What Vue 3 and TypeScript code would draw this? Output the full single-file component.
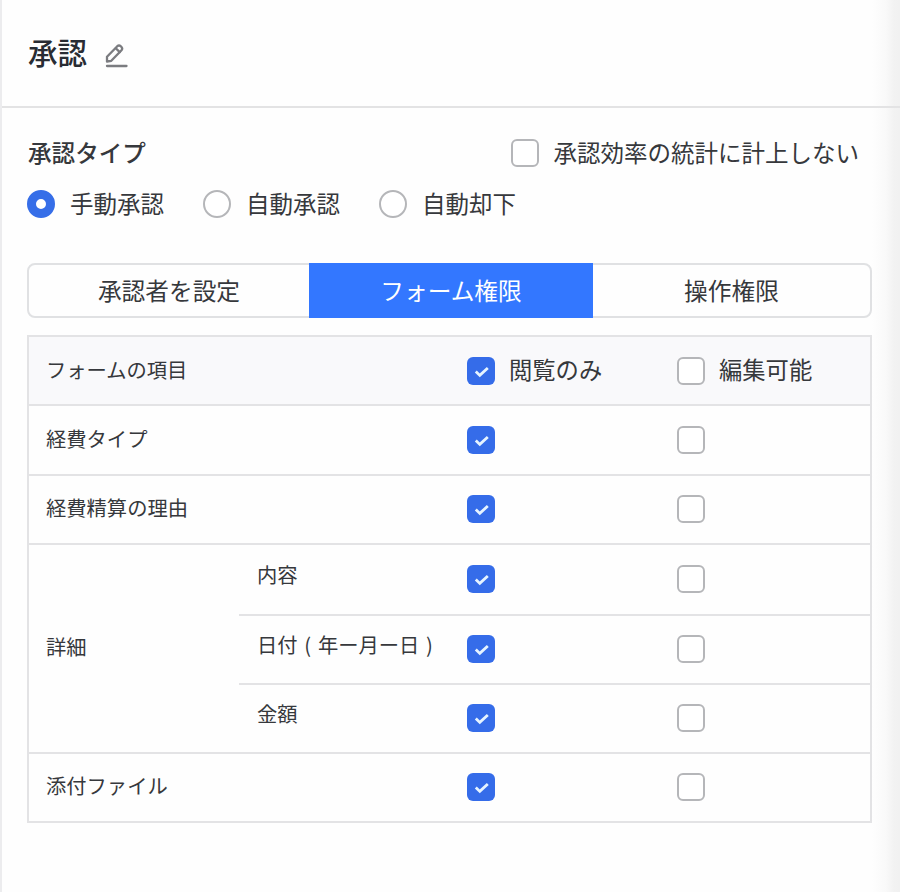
<script setup lang="ts">
import { ref } from 'vue'

interface Item {
  label: string
  detail?: string
  view: boolean
  edit: boolean
}

interface Group {
  label: string
  nested: boolean
  items: Item[]
}

const field = (label: string, detail?: string): Item => ({ label, detail, view: true, edit: false })

const approvalTypes = ['手動承認', '自動承認', '自動却下']
const selectedType = ref(0)
const excluded = ref(false)

const tabs = ['承認者を設定', 'フォーム権限', '操作権限']
const activeTab = ref(1)

const header = ref({ view: true, edit: false })

const groups = ref<Group[]>([
  { label: '経費タイプ', nested: false, items: [field('')] },
  { label: '経費精算の理由', nested: false, items: [field('')] },
  { label: '詳細', nested: true, items: [field('内容'), field('日付', '年ー月ー日'), field('金額')] },
  { label: '添付ファイル', nested: false, items: [field('')] },
])
</script>

<template>
  <div class="panel">
    <header class="head">
      <h1 class="title">承認</h1>
      <svg class="pencil" viewBox="0 0 24 26" fill="none" stroke="#7b7c80" stroke-width="2.3" stroke-linejoin="round" stroke-linecap="round">
        <path d="M3 18.5 L3 13.8 L13.3 3.2 Q15 1.7 16.7 3.2 L17.5 4 Q18.9 5.5 17.5 7.2 L7.3 17.8 Z" />
        <path d="M11.8 5.2 L15.7 9.1" />
        <path d="M3 23 H22.5" />
      </svg>
    </header>

    <main class="body">
      <div class="type-line">
        <h2 class="section">承認タイプ</h2>
        <button class="option" @click="excluded = !excluded">
          <span class="box" :class="{ on: excluded }"></span>
          <span class="caption">承認効率の統計に計上しない</span>
        </button>
      </div>

      <div class="radios">
        <button v-for="(t, i) in approvalTypes" :key="t" class="option" @click="selectedType = i">
          <span class="radio" :class="{ on: selectedType === i }"></span>
          <span class="caption">{{ t }}</span>
        </button>
      </div>

      <nav class="tabs">
        <button v-for="(t, i) in tabs" :key="t" class="tab" :class="{ active: activeTab === i }" @click="activeTab = i">{{ t }}</button>
      </nav>

      <section class="table">
        <div class="group top">
          <div class="label">フォームの項目</div>
          <div class="row">
            <button class="cell" @click="header.view = !header.view">
              <span class="box" :class="{ on: header.view }">
                <svg v-if="header.view" viewBox="0 0 28 28"><path d="M8.8 14.6 L12.8 18.4 L20.8 11" /></svg>
              </span>
              <span class="caption">閲覧のみ</span>
            </button>
            <button class="cell" @click="header.edit = !header.edit">
              <span class="box" :class="{ on: header.edit }">
                <svg v-if="header.edit" viewBox="0 0 28 28"><path d="M8.8 14.6 L12.8 18.4 L20.8 11" /></svg>
              </span>
              <span class="caption">編集可能</span>
            </button>
          </div>
        </div>

        <div v-for="g in groups" :key="g.label" class="group">
          <div class="label">{{ g.label }}</div>
          <div class="rows">
            <div v-for="item in g.items" :key="item.label" class="row" :class="{ nested: g.nested }">
              <span v-if="g.nested" class="sub">{{ item.label }}<template v-if="item.detail"><span class="paren">(</span>{{ item.detail }}<span class="paren">)</span></template></span>
              <button class="cell" @click="item.view = !item.view">
                <span class="box" :class="{ on: item.view }">
                  <svg v-if="item.view" viewBox="0 0 28 28"><path d="M8.8 14.6 L12.8 18.4 L20.8 11" /></svg>
                </span>
              </button>
              <button class="cell" @click="item.edit = !item.edit">
                <span class="box" :class="{ on: item.edit }">
                  <svg v-if="item.edit" viewBox="0 0 28 28"><path d="M8.8 14.6 L12.8 18.4 L20.8 11" /></svg>
                </span>
              </button>
            </div>
          </div>
        </div>
      </section>
    </main>
  </div>
</template>

<style>
body {
  background: #fefefe;
}
</style>

<style scoped>
.panel {
  box-sizing: border-box;
  width: 900px;
  height: 892px;
  overflow: hidden;
  border-left: 2px solid #ececee;
  background: linear-gradient(to right, #fefefe 870px, #f9f9f9 884px, #f2f2f2 892px, #f1f1f1 898px);
  color: #36383c;
  font-family: 'Noto Sans CJK JP', sans-serif;
  font-size: 23.5px;
  line-height: 32px;
}

button {
  margin: 0;
  padding: 0;
  border: 0;
  background: none;
  color: inherit;
  font: inherit;
  white-space: nowrap;
}

.head {
  box-sizing: border-box;
  display: flex;
  align-items: center;
  gap: 17px;
  height: 108px;
  padding-left: 26px;
  border-bottom: 2px solid #e3e3e4;
}

.title {
  margin: 0;
  padding-bottom: 5px;
  color: #292c33;
  font-size: 29.5px;
  font-weight: 500;
  line-height: 40px;
}

.pencil {
  width: 24px;
  height: 26px;
  margin-top: 5px;
}

.body {
  padding: 29px 26px 0 25px;
}

.type-line {
  display: flex;
  align-items: center;
  justify-content: space-between;
  width: 832px;
  height: 32px;
}

.section {
  margin: 0 0 0 1px;
  padding-bottom: 3px;
  font-size: 23.6px;
  font-weight: 500;
}

.option {
  display: flex;
  align-items: center;
  gap: 15px;
}

.caption {
  padding-bottom: 3px;
}

.radios {
  display: flex;
  gap: 39px;
  height: 32px;
  margin-top: 19px;
}

.radio,
.box {
  box-sizing: border-box;
  flex: none;
  display: block;
  width: 28px;
  height: 28px;
  border: 2px solid #b5b6b9;
  background: #fff;
}

.radio {
  border-radius: 50%;
}

.radio.on {
  border: 9px solid #366ee8;
}

.box {
  border-radius: 6px;
}

.box.on {
  border: 0;
  background: #356ce9;
}

.box svg {
  display: block;
  fill: none;
  stroke: #e6f4ff;
  stroke-width: 2.8;
}

.tabs {
  box-sizing: border-box;
  display: grid;
  grid-template-columns: 280px 284px 1fr;
  width: 845px;
  height: 55px;
  margin-top: 43px;
  border: 2px solid #e0e1e3;
  border-radius: 8px;
}

.tab {
  margin: -2px 0;
  padding-bottom: 1px;
  font-size: 23.7px;
}

.tab.active {
  background: #3377ff;
  color: #fff;
}

.table {
  box-sizing: border-box;
  display: grid;
  grid-template-rows: 67px 69.5px 69.5px 208.5px 1fr;
  width: 845px;
  height: 488px;
  margin-top: 17px;
  border: 2px solid #e3e3e5;
  font-size: 20.3px;
}

.group {
  box-sizing: border-box;
  display: grid;
  grid-template-columns: 210px 1fr;
  border-top: 2px solid #e3e3e5;
}

.top {
  border-top: 0;
  background: #f9f9fb;
}

.label {
  align-self: center;
  padding: 0 0 4px 17px;
  white-space: nowrap;
}

.rows {
  display: grid;
  grid-auto-rows: 1fr;
}

.row {
  box-sizing: border-box;
  display: grid;
  grid-template-columns: 210px 1fr;
  align-items: center;
  padding-left: 228px;
}

.row.nested {
  grid-template-columns: 210px 210px 1fr;
  padding-left: 18px;
}

.row.nested + .row.nested {
  border-top: 2px solid #e3e3e5;
}

.sub {
  padding-bottom: 11px;
  white-space: nowrap;
}

.paren {
  display: inline-block;
  width: 1em;
  text-align: center;
}

.cell {
  display: flex;
  align-items: center;
  gap: 14px;
  font-size: 23.3px;
}
</style>
